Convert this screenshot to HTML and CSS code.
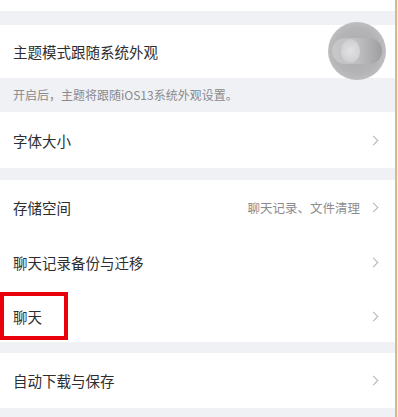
FILE: index.html
```html
<!DOCTYPE html>
<html>
<head>
    <meta charset="UTF-8" />
    <title>通用设置</title>
    <link rel="stylesheet" href="styles.css">
</head>
<body>
    <div class="page">
        <div class="top-cut"></div>
        <div class="gap gap-top"></div>

        <div class="row row-switch">
            <span class="label">主题模式跟随系统外观</span>
            <div class="toggle-glow">
                <div class="toggle"><div class="knob"></div></div>
            </div>
        </div>
        <div class="note">开启后，主题将跟随iOS13系统外观设置。</div>
        <div class="row row-font">
            <span class="label">字体大小</span>
            <span class="chev"></span>
        </div>

        <div class="gap"></div>

        <div class="row">
            <span class="label">存储空间</span>
            <span class="extra">聊天记录、文件清理</span>
            <span class="chev"></span>
        </div>
        <div class="row">
            <span class="label">聊天记录备份与迁移</span>
            <span class="chev"></span>
        </div>
        <div class="row row-chat">
            <span class="label">聊天</span>
            <span class="chev"></span>
            <div class="mark"></div>
        </div>

        <div class="gap gap-mid"></div>

        <div class="row">
            <span class="label">自动下载与保存</span>
            <span class="chev"></span>
        </div>

        <div class="gap gap-end"></div>
    </div>
</body>
</html>
```

FILE: styles.css
```css
body {
    margin: 0;
    background-color: #f0f1f5;
    font-family: "Noto Sans CJK SC", "Noto Sans", sans-serif;
    color: #333;
}
.page {
    width: 395px;
    height: 417px;
    overflow: hidden;
    border-right: 2px solid #d8b98c;
    background-color: #f0f1f5;
}
.top-cut {
    height: 11px;
    background-color: #fff;
}
.gap {
    height: 12px;
}
.gap-top {
    height: 14px;
}
.gap-mid {
    height: 11px;
}
.gap-end {
    height: 20px;
}
.row {
    position: relative;
    display: flex;
    align-items: center;
    height: 55px;
    padding: 0 18px 0 13px;
    background-color: #fff;
}
.row-switch {
    height: 53px;
}
.row-font {
    height: 56px;
}
.row-chat {
    height: 52px;
}
.label {
    flex: 1;
    font-size: 14.5px;
    color: #2e2e30;
}
.extra {
    font-size: 12.5px;
    color: #8c8c90;
    margin-right: 10px;
}
.chev {
    width: 6px;
    height: 6px;
    border-top: 1.3px solid #b4b4b8;
    border-right: 1.3px solid #b4b4b8;
    transform: rotate(45deg);
}
.note {
    height: 34px;
    line-height: 34px;
    padding-left: 13px;
    font-size: 12px;
    color: #8a8a8e;
}
.toggle-glow {
    position: absolute;
    right: 9px;
    top: -3px;
    width: 58px;
    height: 58px;
    border-radius: 50%;
    background: radial-gradient(circle at 50% 50%, #acacae 0%, #b4b4b6 55%, #c2c2c4 78%, #d8d8da 100%);
    display: flex;
    align-items: center;
    justify-content: center;
}
.toggle {
    position: relative;
    width: 50px;
    height: 26px;
    border-radius: 13px;
    background: linear-gradient(90deg, #c8c8ca, #bdbdbf 55%, #9e9ea0);
}
.knob {
    position: absolute;
    left: 9px;
    top: 1px;
    width: 19px;
    height: 24px;
    border-radius: 50%;
    background: radial-gradient(circle at 50% 50%, #e2e2e4, #d3d3d5 60%, #c2c2c4);
}
.mark {
    position: absolute;
    left: 0;
    top: 2px;
    width: 60px;
    height: 40px;
    border: 4px solid #e8000b;
}
```
